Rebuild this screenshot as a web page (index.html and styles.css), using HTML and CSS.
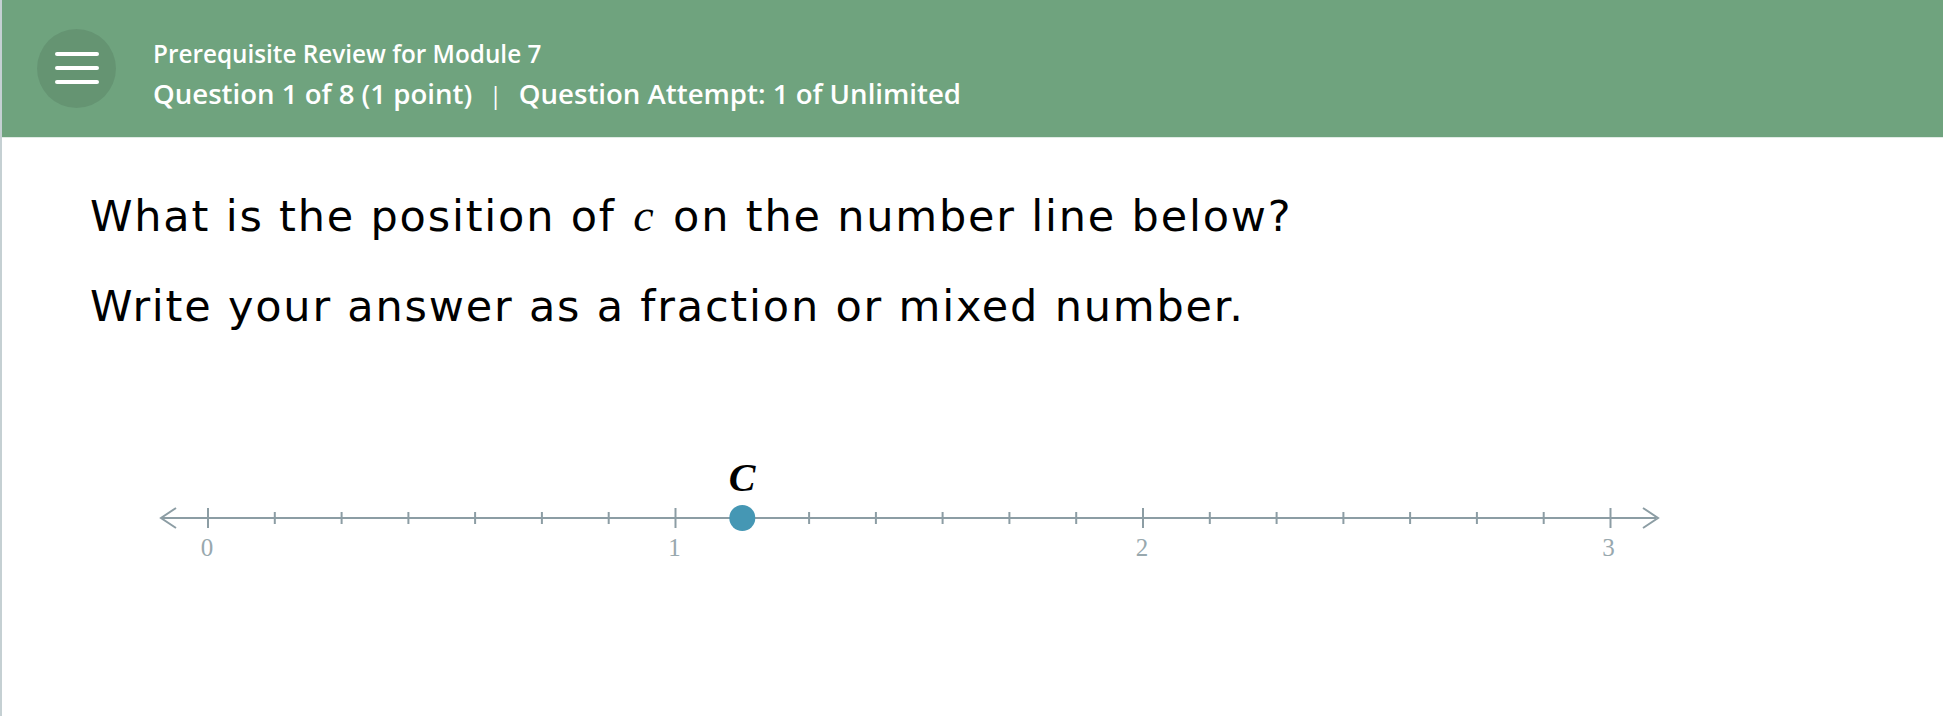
FILE: index.html
```html
<!DOCTYPE html>
<html>
<head>
<meta name="viewport" content="width=device-width, initial-scale=1">
<link rel="stylesheet" href="styles.css">
</head>
<body>

<div class="page">
  <div class="header">
    <div class="menu">
      <span></span>
      <span></span>
      <span></span>
    </div>
    <div class="title">
      <div class="topic">Prerequisite Review for Module 7</div>
      <div class="status">Question 1 of 8 (1 point)<span class="sep">|</span>Question Attempt: 1 of Unlimited</div>
    </div>
  </div>

  <div class="question">
    <p>What is the position of <i class="var">c</i> on the number line below?</p>
    <p>Write your answer as a fraction or mixed number.</p>

    <svg class="numberline" width="1540" height="120" viewBox="140 450 1540 120">
      <g stroke="#8c9da4" stroke-width="2" fill="none">
        <line x1="162" y1="519" x2="1656" y2="519"/>
        <polyline points="176,509 161,519 176,529"/>
        <polyline points="1643,509 1658,519 1643,529"/>
        <!-- whole numbers -->
        <line x1="208" y1="509" x2="208" y2="529"/>
        <line x1="675.5" y1="509" x2="675.5" y2="529"/>
        <line x1="1143" y1="509" x2="1143" y2="529"/>
        <line x1="1610.5" y1="509" x2="1610.5" y2="529"/>
        <!-- sevenths -->
        <line x1="274.8" y1="513" x2="274.8" y2="525"/>
        <line x1="341.6" y1="513" x2="341.6" y2="525"/>
        <line x1="408.4" y1="513" x2="408.4" y2="525"/>
        <line x1="475.1" y1="513" x2="475.1" y2="525"/>
        <line x1="541.9" y1="513" x2="541.9" y2="525"/>
        <line x1="608.7" y1="513" x2="608.7" y2="525"/>
        <line x1="809.1" y1="513" x2="809.1" y2="525"/>
        <line x1="875.9" y1="513" x2="875.9" y2="525"/>
        <line x1="942.6" y1="513" x2="942.6" y2="525"/>
        <line x1="1009.4" y1="513" x2="1009.4" y2="525"/>
        <line x1="1076.2" y1="513" x2="1076.2" y2="525"/>
        <line x1="1209.8" y1="513" x2="1209.8" y2="525"/>
        <line x1="1276.6" y1="513" x2="1276.6" y2="525"/>
        <line x1="1343.4" y1="513" x2="1343.4" y2="525"/>
        <line x1="1410.1" y1="513" x2="1410.1" y2="525"/>
        <line x1="1476.9" y1="513" x2="1476.9" y2="525"/>
        <line x1="1543.7" y1="513" x2="1543.7" y2="525"/>
      </g>
      <g class="labels">
        <text x="207" y="557">0</text>
        <text x="674.5" y="557">1</text>
        <text x="1142" y="557">2</text>
        <text x="1608.5" y="557">3</text>
      </g>
      <circle cx="742.3" cy="519" r="13" fill="#4597b4"/>
      <text class="point" x="742" y="492">C</text>
    </svg>
  </div>
</div>

</body>
</html>
```

FILE: styles.css
```css
* {
  box-sizing: border-box;
}

body {
  margin: 0;
  background: white;
  font-family: "DejaVu Sans", Verdana, sans-serif;
}

.page {
  border-left: 2px solid #c5d0d3;
  min-height: 716px;
}

/* Top bar */
.header {
  height: 138px;
  background: #6fa37e;
  border-bottom: 1px solid #e0ebe5;
  display: flex;
  align-items: center;
  padding-left: 35px;
  color: white;
  font-family: "Open Sans", Lato, sans-serif;
  font-weight: 600;
}

.menu {
  width: 79px;
  height: 79px;
  border-radius: 50%;
  background: rgba(0, 0, 0, 0.09);
  display: flex;
  flex-direction: column;
  justify-content: center;
  align-items: center;
  gap: 10px;
  margin-top: -1px;
}

.menu span {
  display: block;
  width: 44px;
  height: 4px;
  border-radius: 2px;
  background: white;
}

.title {
  margin-left: 37px;
  margin-top: 13px;
}

.topic {
  font-size: 24.3px;
  line-height: 38px;
}

.status {
  font-size: 27.6px;
  line-height: 40px;
}

.sep {
  margin: 0 17px;
  font-size: 23px;
  font-weight: 400;
}

/* Question body */
.question {
  padding: 33px 0 0 88px;
}

.question p {
  margin: 0;
  font-size: 43px;
  letter-spacing: 1.8px;
  line-height: 90px;
  color: black;
}

.var {
  font-family: "Liberation Serif", "Times New Roman", serif;
  font-size: 46px;
  letter-spacing: 0;
  margin: 0 4px 0 2px;
}

.numberline {
  display: block;
  margin: 98px 0 0 50px;
}

.labels text {
  font-family: "Liberation Serif", "Times New Roman", serif;
  font-size: 25px;
  fill: #98a8ae;
  text-anchor: middle;
}

.point {
  font-family: "Liberation Serif", "Times New Roman", serif;
  font-size: 40px;
  font-weight: bold;
  font-style: italic;
  text-anchor: middle;
}
```
